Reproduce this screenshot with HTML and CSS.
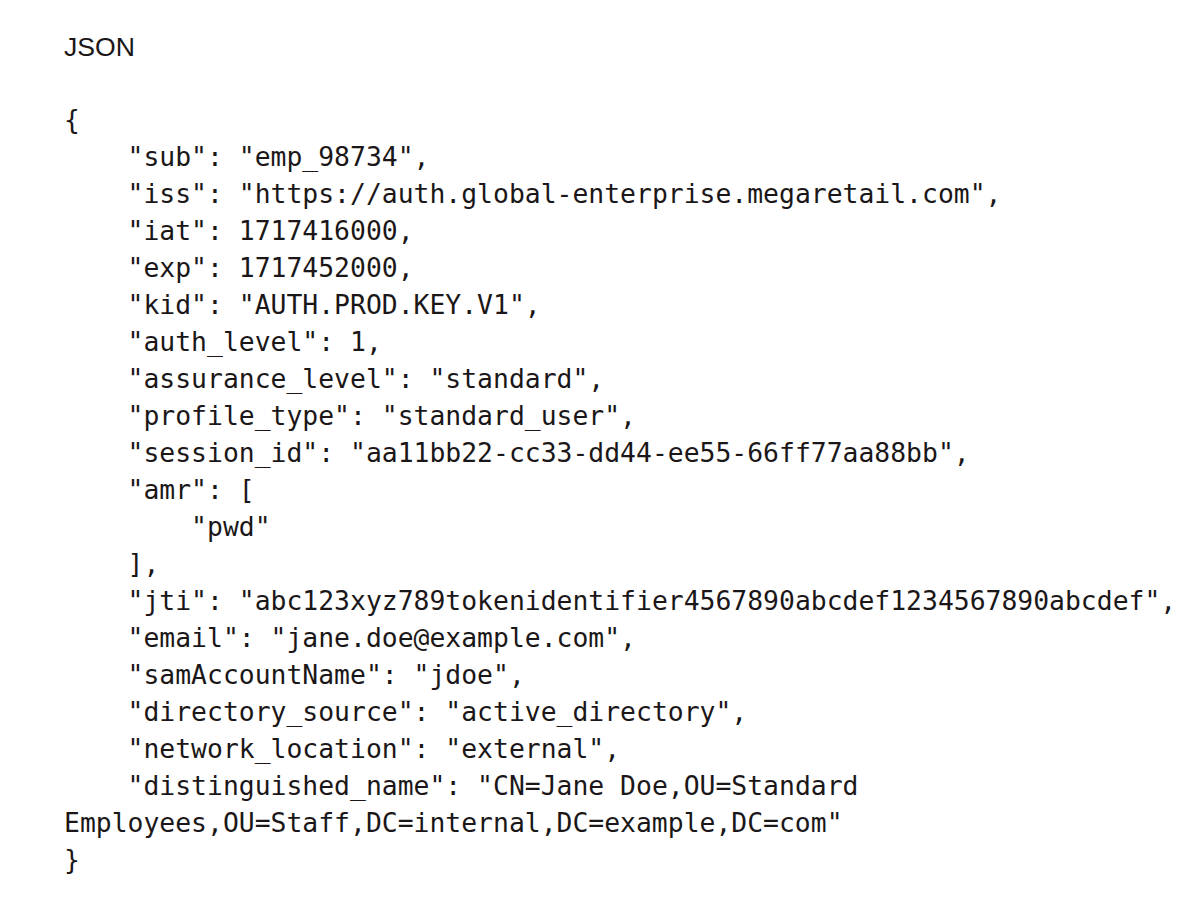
FILE: index.html
```html
<!DOCTYPE html>
<html lang="en">
<head>
<meta charset="utf-8">
<title>JSON</title>
<link rel="stylesheet" href="styles.css">
</head>
<body>
<main class="page">
<div class="label">JSON</div>
<pre class="code">{
    "sub": "emp_98734",
    "iss": "https://auth.global-enterprise.megaretail.com",
    "iat": 1717416000,
    "exp": 1717452000,
    "kid": "AUTH.PROD.KEY.V1",
    "auth_level": 1,
    "assurance_level": "standard",
    "profile_type": "standard_user",
    "session_id": "aa11bb22-cc33-dd44-ee55-66ff77aa88bb",
    "amr": [
        "pwd"
    ],
    "jti": "abc123xyz789tokenidentifier4567890abcdef1234567890abcdef",
    "email": "jane.doe@example.com",
    "samAccountName": "jdoe",
    "directory_source": "active_directory",
    "network_location": "external",
    "distinguished_name": "CN=Jane Doe,OU=Standard Employees,OU=Staff,DC=internal,DC=example,DC=com"
}</pre>
</main>
</body>
</html>
```
FILE: styles.css
```css
html, body {
  margin: 0;
  padding: 0;
  background: #ffffff;
}
.page {
  padding: 29px 8px 0 64px;
  color: #1b1718;
}
.label {
  font-family: "Liberation Sans", Arial, sans-serif;
  font-size: 26.6px;
  line-height: 37px;
}
.code {
  margin: 35px 0 0 0;
  font-family: "DejaVu Sans Mono", monospace;
  font-size: 26.4px;
  line-height: 37px;
  white-space: pre-wrap;
  word-wrap: break-word;
}
```
